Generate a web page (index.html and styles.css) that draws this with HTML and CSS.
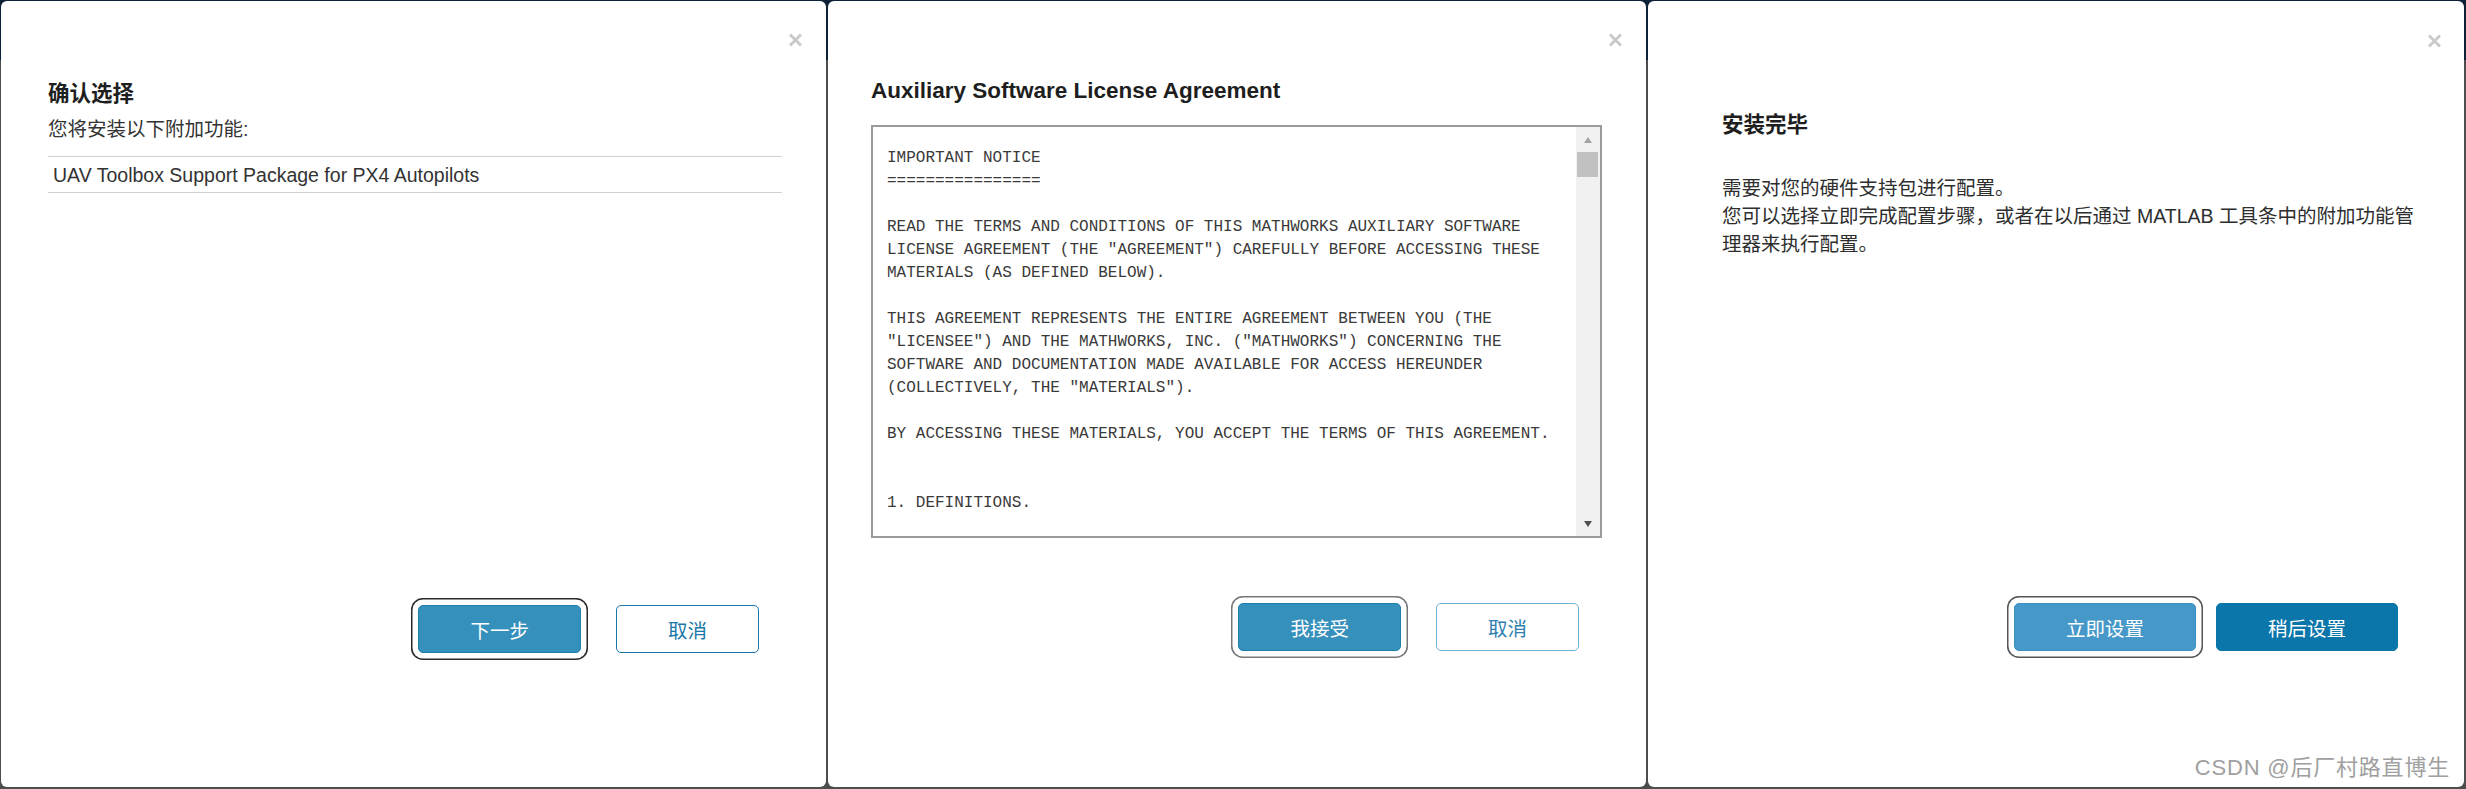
FILE: index.html
```html
<!DOCTYPE html>
<html lang="zh-CN">
<head>
    <meta charset="UTF-8">
    <meta name="viewport" content="width=device-width, initial-scale=1.0">
    <title>附加功能安装</title>
    <link rel="stylesheet" href="styles.css">
</head>
<body>

    <div class="screens">

        <!-- Step 1: confirm -->
        <section class="dialog dialog-confirm">
            <button class="close" aria-label="关闭">
                <svg width="15" height="14" viewBox="0 0 15 14"><path d="M2 1.5L13 12.5M13 1.5L2 12.5" stroke="#c9c9c9" stroke-width="2.8"/></svg>
            </button>
            <h2 class="dialog-title">确认选择</h2>
            <p class="dialog-text">您将安装以下附加功能:</p>
            <ul class="addon-list">
                <li>UAV Toolbox Support Package for PX4 Autopilots</li>
            </ul>
            <div class="dialog-actions">
                <button class="btn btn-primary is-focused">下一步</button>
                <button class="btn btn-outline">取消</button>
            </div>
        </section>

        <!-- Step 2: license -->
        <section class="dialog dialog-license">
            <button class="close" aria-label="关闭">
                <svg width="15" height="14" viewBox="0 0 15 14"><path d="M2 1.5L13 12.5M13 1.5L2 12.5" stroke="#c9c9c9" stroke-width="2.8"/></svg>
            </button>
            <h2 class="dialog-title">Auxiliary Software License Agreement</h2>
            <div class="license">
<pre class="license-text">IMPORTANT NOTICE
================

READ THE TERMS AND CONDITIONS OF THIS MATHWORKS AUXILIARY SOFTWARE
LICENSE AGREEMENT (THE "AGREEMENT") CAREFULLY BEFORE ACCESSING THESE
MATERIALS (AS DEFINED BELOW).

THIS AGREEMENT REPRESENTS THE ENTIRE AGREEMENT BETWEEN YOU (THE
"LICENSEE") AND THE MATHWORKS, INC. ("MATHWORKS") CONCERNING THE
SOFTWARE AND DOCUMENTATION MADE AVAILABLE FOR ACCESS HEREUNDER
(COLLECTIVELY, THE "MATERIALS").

BY ACCESSING THESE MATERIALS, YOU ACCEPT THE TERMS OF THIS AGREEMENT.


1. DEFINITIONS.

</pre>
                <div class="scrollbar" aria-hidden="true">
                    <span class="scroll-arrow scroll-up"></span>
                    <span class="scroll-track"><span class="scroll-thumb"></span></span>
                    <span class="scroll-arrow scroll-down"></span>
                </div>
            </div>
            <div class="dialog-actions">
                <button class="btn btn-primary is-focused">我接受</button>
                <button class="btn btn-outline btn-soft">取消</button>
            </div>
        </section>

        <!-- Step 3: done -->
        <section class="dialog dialog-done">
            <button class="close" aria-label="关闭">
                <svg width="15" height="14" viewBox="0 0 15 14"><path d="M2 1.5L13 12.5M13 1.5L2 12.5" stroke="#c9c9c9" stroke-width="2.8"/></svg>
            </button>
            <h2 class="dialog-title">安装完毕</h2>
            <p class="setup-note">需要对您的硬件支持包进行配置。<br>您可以选择立即完成配置步骤，或者在以后通过 MATLAB 工具条中的附加功能管理器来执行配置。</p>
            <div class="dialog-actions">
                <button class="btn btn-light is-focused">立即设置</button>
                <button class="btn btn-dark">稍后设置</button>
            </div>
            <span class="watermark">CSDN @后厂村路直博生</span>
        </section>

    </div>

</body>
</html>
```

FILE: styles.css
```css
* {
    box-sizing: border-box;
}
html, body {
    margin: 0;
    padding: 0;
}
body {
    height: 789px;
    overflow: hidden;
    background: linear-gradient(#0c2236 0, #0c2236 60px, #4d4d4d 60px);
    font-family: "Liberation Sans", Arial, "Noto Sans CJK SC", sans-serif;
    color: #333;
}
.screens {
    display: flex;
    gap: 2px;
    padding: 1px 2px 0 1px;
}
.dialog {
    position: relative;
    display: flex;
    flex-direction: column;
    height: 786px;
    background-color: #fff;
    border-radius: 6px;
}
.dialog-confirm {
    width: 825px;
    padding: 78px 44px 134px 47px;
}
.dialog-license {
    width: 818px;
    padding: 76px 44px 136px 43px;
}
.dialog-done {
    width: 816px;
    padding: 109px 38px 136px 74px;
}
.close {
    position: absolute;
    top: 32px;
    right: 23px;
    width: 15px;
    height: 14px;
    padding: 0;
    border: none;
    background: none;
    line-height: 0;
}
.dialog-done .close {
    top: 33px;
    right: 22px;
}
.dialog-title {
    margin: 0;
    font-size: 21.5px;
    line-height: 30px;
    font-weight: bold;
    color: #1e1e1e;
}
.dialog-license .dialog-title {
    font-size: 22.5px;
    line-height: 28px;
}
.dialog-text {
    margin: 6px 0 0;
    font-size: 19.5px;
    line-height: 28px;
}
.addon-list {
    list-style: none;
    margin: 13px 0 0;
    padding: 0;
    border-top: 1px solid #d2d2d2;
    border-bottom: 1px solid #d2d2d2;
}
.addon-list li {
    padding: 4px 5px 3px;
    font-size: 19.5px;
    line-height: 28px;
}

/* license text box with its scrollbar */
.license {
    display: flex;
    margin-top: 20px;
    height: 413px;
    border: 2px solid #9b9b9b;
    overflow: hidden;
}
.license-text {
    flex: 1;
    margin: 0;
    padding: 20px 14px;
    overflow: hidden;
    font-family: "Liberation Mono", "Courier New", monospace;
    font-size: 16px;
    line-height: 23px;
    color: #3a3a3a;
}
.scrollbar {
    display: flex;
    flex-direction: column;
    width: 24px;
    background-color: #f1f1f1;
}
.scroll-arrow {
    display: flex;
    align-items: center;
    justify-content: center;
    height: 25px;
}
.scroll-arrow::before {
    content: "";
    border-left: 4.5px solid transparent;
    border-right: 4.5px solid transparent;
}
.scroll-up::before {
    border-bottom: 6px solid #a3a3a3;
}
.scroll-down::before {
    border-top: 6px solid #505050;
}
.scroll-track {
    flex: 1;
    padding: 0 2px 0 1px;
}
.scroll-thumb {
    display: block;
    height: 25px;
    background-color: #c1c1c1;
}

.setup-note {
    margin: 34px 0 0;
    width: 704px;
    font-size: 19.5px;
    line-height: 28px;
    color: #2e2e2e;
}

/* buttons */
.dialog-actions {
    margin-top: auto;
    display: flex;
    justify-content: flex-end;
    gap: 35px;
    padding-right: 23px;
}
.dialog-done .dialog-actions {
    gap: 20px;
    padding-right: 28px;
}
.btn {
    height: 48px;
    padding: 0 51px;
    border: 1px solid #1a78a8;
    border-radius: 5px;
    font-family: inherit;
    font-size: 19.5px;
    cursor: pointer;
}
.btn-primary {
    background-color: #3590bc;
    border-color: #1f80ae;
    color: #fff;
}
.btn-outline {
    background-color: #fff;
    color: #1a78a8;
}
.btn-soft {
    border-color: #6eb1d5;
    color: #2f80ae;
}
.btn-light {
    background-color: #4698c8;
    border-color: #3b8fc2;
    color: #fff;
}
.btn-dark {
    background-color: #0b76a9;
    border-color: #0b76a9;
    color: #fff;
}
.is-focused {
    box-shadow: 0 0 0 5.5px #fff, 0 0 0 7px #2a2a2a;
}
.dialog-license .is-focused {
    box-shadow: 0 0 0 5.5px #fff, 0 0 0 7px #777;
}
.dialog-done .is-focused {
    box-shadow: 0 0 0 5.5px #fff, 0 0 0 7px #555;
}
.watermark {
    position: absolute;
    right: 14px;
    bottom: 6px;
    font-size: 22px;
    letter-spacing: 0.8px;
    color: #a0a0a0;
}
```
